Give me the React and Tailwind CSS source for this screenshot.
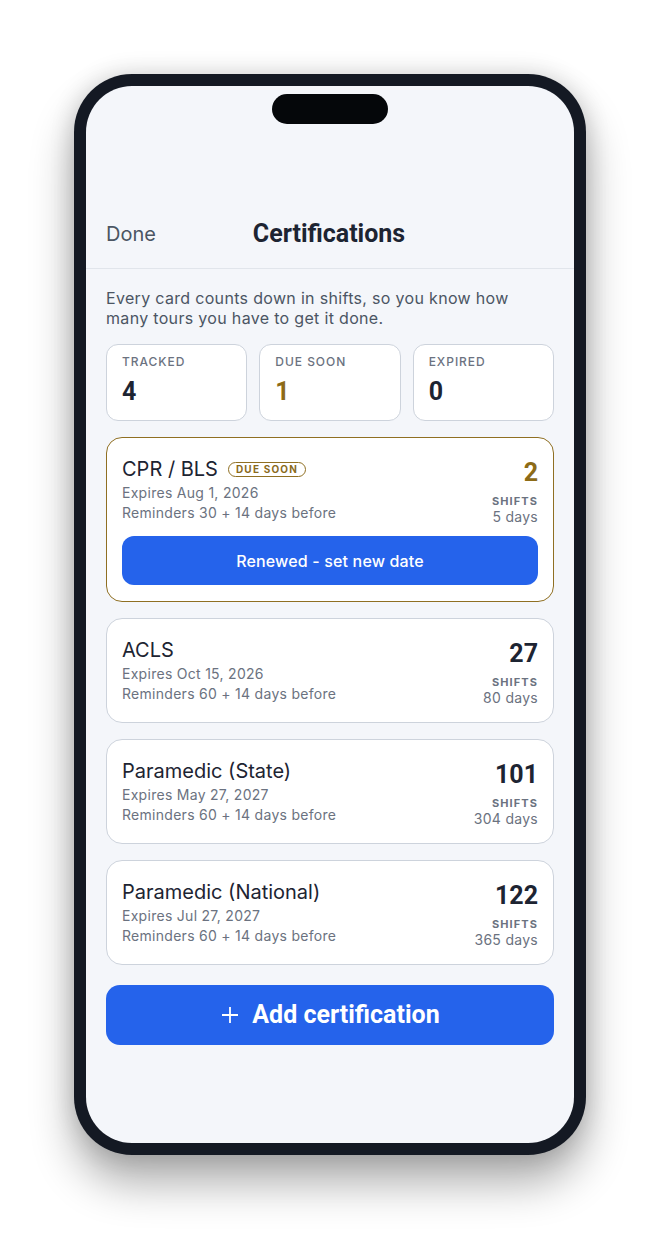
import React from "react";

const certs = [
  { name: "CPR / BLS", expires: "Aug 1, 2026", remind: 30, shifts: 2, days: 5, due: true },
  { name: "ACLS", expires: "Oct 15, 2026", remind: 60, shifts: 27, days: 80 },
  { name: "Paramedic (State)", expires: "May 27, 2027", remind: 60, shifts: 101, days: 304 },
  { name: "Paramedic (National)", expires: "Jul 27, 2027", remind: 60, shifts: 122, days: 365 },
];

const stats = [
  { label: "TRACKED", value: 4, gold: false },
  { label: "DUE SOON", value: 1, gold: true },
  { label: "EXPIRED", value: 0, gold: false },
];

const heading = "font-['Roboto',_'Liberation_Sans',_sans-serif]";

function CertCard({ cert }) {
  return (
    <div
      className={`rounded-[16px] border bg-white px-[15px] pt-[17px] ${
        cert.due ? "border-[#8f6f22] pb-[16px]" : "border-[#cdd3dc] pb-[15px]"
      }`}
    >
      <div className="flex justify-between">
        <div>
          <div className="flex items-center gap-[10px]">
            <span className="text-[20px] leading-[28px] text-[#1d2432]">{cert.name}</span>
            {cert.due && (
              <span className="rounded-full border-[1.5px] border-[#8f6f22] px-[7px] text-[10px] leading-[13px] font-bold tracking-[0.12em] text-[#8a6a1c]">
                DUE SOON
              </span>
            )}
          </div>
          <div className="text-[14px] leading-[20px] tracking-[0.02em] text-[#6b7280]">
            Expires {cert.expires}
          </div>
          <div className="text-[14px] leading-[20px] tracking-[0.02em] text-[#6b7280]">
            Reminders {cert.remind} + 14 days before
          </div>
        </div>
        <div className="flex flex-col items-end pt-[4px]">
          <span
            className={`${heading} text-[25px] leading-[28px] font-bold ${
              cert.due ? "text-[#8d6b17]" : "text-[#1d2432]"
            }`}
          >
            {cert.shifts}
          </span>
          <span className="mt-[7px] text-[11px] leading-[14px] font-bold tracking-[0.1em] text-[#6b7280]">
            SHIFTS
          </span>
          <span className="text-[14px] leading-[18px] tracking-[0.02em] text-[#6b7280]">
            {cert.days} days
          </span>
        </div>
      </div>
      {cert.due && (
        <button className="mt-[10px] h-[49px] w-full rounded-[12px] bg-[#2563eb] text-[16px] font-medium tracking-[0.01em] text-white">
          Renewed - set new date
        </button>
      )}
    </div>
  );
}

export default function App() {
  return (
    <div className="flex h-[1244px] w-[660px] justify-center bg-white pt-[74px] font-['Inter',_'Liberation_Sans',_sans-serif]">
      <div className="h-[1081px] w-[512px] rounded-[58px] bg-[#141923] p-[12px] shadow-[0_28px_44px_rgba(0,0,0,0.32),0_0_24px_rgba(0,0,0,0.16)]">
        <div className="flex h-full flex-col overflow-hidden rounded-[46px] bg-[#f4f6fa]">
          <div className="mt-[8px] flex justify-center">
            <div className="h-[30px] w-[116px] rounded-full bg-[#05070a]" />
          </div>

          {/* nav header */}
          <header className="mt-[75px] grid h-[70px] grid-cols-[1fr_auto_1fr] items-center border-b border-[#e1e5eb] px-5">
            <span className="text-[20px] text-[#4b5563]">Done</span>
            <h1 className={`${heading} -ml-[2px] text-[25px] font-bold text-[#1d2432]`}>Certifications</h1>
            <span />
          </header>

          <main className="px-5 pt-[19px]">
            <p className="text-[16px] leading-[20px] tracking-[0.02em] text-[#4b5563]">
              Every card counts down in shifts, so you know how many tours you have to get it done.
            </p>

            <div className="mt-4 grid grid-cols-3 gap-3">
              {stats.map((s) => (
                <div
                  key={s.label}
                  className="h-[77px] rounded-[12px] border border-[#cdd3dc] bg-white px-[15px] pt-[9px]"
                >
                  <div className="text-[12px] leading-[16px] font-medium tracking-[0.08em] text-[#6b7280]">
                    {s.label}
                  </div>
                  <div
                    className={`${heading} mt-[8px] text-[25px] leading-[28px] font-bold ${
                      s.gold ? "text-[#8d6b17]" : "text-[#1d2432]"
                    }`}
                  >
                    {s.value}
                  </div>
                </div>
              ))}
            </div>

            <div className="mt-4 flex flex-col gap-4">
              {certs.map((c) => (
                <CertCard key={c.name} cert={c} />
              ))}
            </div>

            <button
              className={`${heading} mt-[20px] flex h-[60px] w-full items-center justify-center gap-3 rounded-[14px] bg-[#2563eb] text-[25px] font-bold text-white`}
            >
              <svg width="20" height="20" viewBox="0 0 20 20" fill="none" stroke="white" strokeWidth="1.8">
                <path d="M10 2v16M2 10h16" />
              </svg>
              Add certification
            </button>
          </main>
        </div>
      </div>
    </div>
  );
}
